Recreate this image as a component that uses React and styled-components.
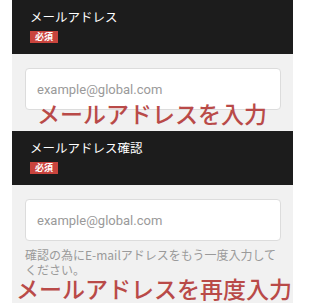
import React from "react";
import styled, { createGlobalStyle } from "styled-components";

const GlobalStyle = createGlobalStyle`
  html, body {
    margin: 0;
    padding: 0;
    background: #fff;
  }
  body {
    font-family: "Noto Sans CJK JP", "Noto Sans", sans-serif;
  }
`;

const Form = styled.div`
  width: 281px;
  margin-left: 12px;
`;

const FieldHead = styled.div`
  background: #1c1c1c;
  padding: 8px 17px 11px 18px;
  display: flex;
  flex-direction: column;
  align-items: flex-start;
  gap: 5px;
`;

const Label = styled.div`
  color: #fff;
  font-size: 12.5px;
  line-height: 18px;
`;

const Required = styled.span`
  display: inline-block;
  background: #c9443d;
  color: #fff;
  font-size: 9px;
  font-weight: bold;
  line-height: 12px;
  height: 12px;
  padding: 0 5px;
`;

const FieldBody = styled.div`
  position: relative;
  background: #f1f1f1;
  padding: 14px 12px ${(p) => p.$bottom}px 13px;
`;

const Input = styled.input`
  display: block;
  box-sizing: border-box;
  width: 100%;
  height: 42px;
  border: 1px solid #dcdcdc;
  border-radius: 4px;
  background: #fff;
  padding: 0 11px;
  font-family: Roboto, "Liberation Sans", Arial, sans-serif;
  font-size: 13px;
  color: #333;
  outline: none;

  &::placeholder {
    color: #9a9a9a;
  }
`;

const Help = styled.p`
  margin: 6px 0 0;
  color: #9a9a9a;
  font-size: 12px;
  line-height: 15px;
`;

const Note = styled.div`
  position: absolute;
  left: ${(p) => p.$left}px;
  top: ${(p) => p.$top}px;
  color: #b94a48;
  font-size: 23px;
  font-weight: 500;
  line-height: 20px;
  white-space: nowrap;
`;

export default function App() {
  return (
    <>
      <GlobalStyle />
      <Form>
        <FieldHead>
          <Label>メールアドレス</Label>
          <Required>必須</Required>
        </FieldHead>
        <FieldBody $bottom={21}>
          <Input type="email" placeholder="example@global.com" />
          <Note $left={25} $top={49}>メールアドレスを入力</Note>
        </FieldBody>

        <FieldHead>
          <Label>メールアドレス確認</Label>
          <Required>必須</Required>
        </FieldHead>
        <FieldBody $bottom={40}>
          <Input type="email" placeholder="example@global.com" />
          <Help>確認の為にE-mailアドレスをもう一度入力してください。</Help>
          <Note $left={4} $top={93}>メールアドレスを再度入力</Note>
        </FieldBody>
      </Form>
    </>
  );
}
